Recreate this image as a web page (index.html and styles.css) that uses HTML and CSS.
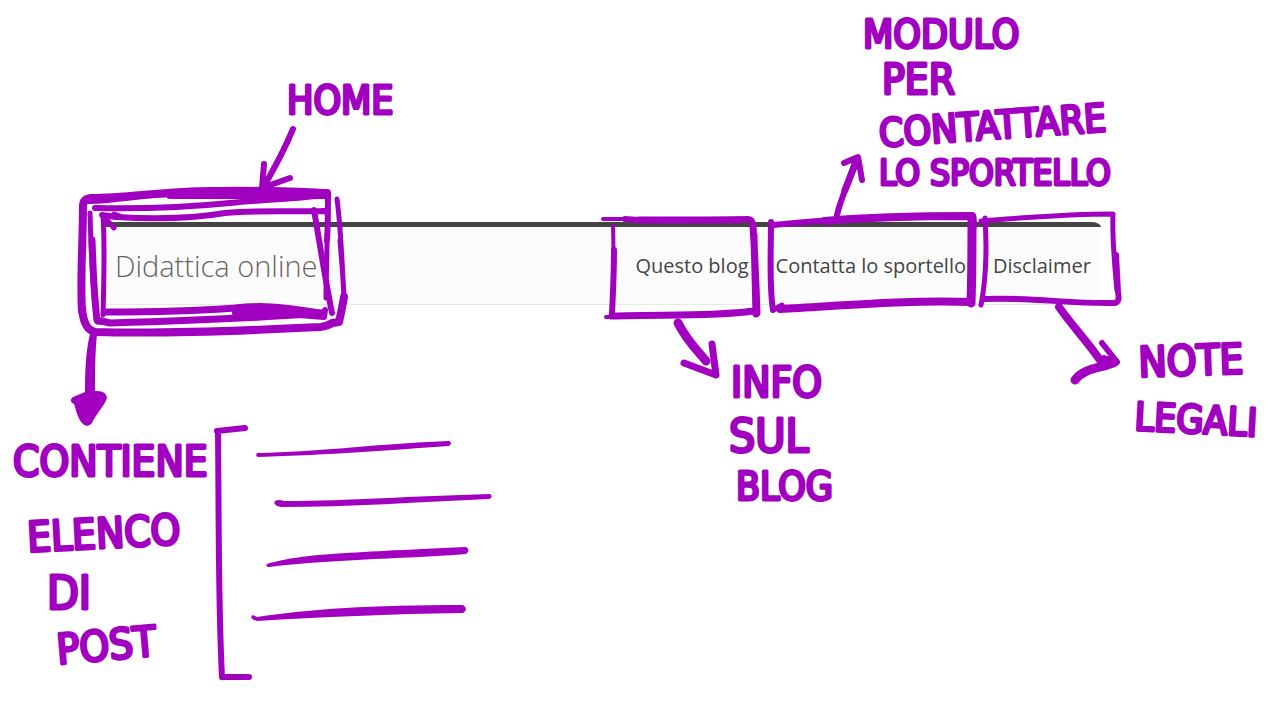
FILE: index.html
```html
<!DOCTYPE html>
<html lang="it">
<head>
<meta charset="utf-8">
<title>Didattica online</title>
<meta name="viewport" content="width=device-width, initial-scale=1">
<link rel="stylesheet" href="styles.css">
</head>
<body>
<main class="board">
  <header class="site-header">
    <a class="brand" href="#home">Didattica online</a>
    <nav class="menu" aria-label="Menu principale">
      <a href="#blog">Questo blog</a>
      <a href="#contatta">Contatta lo sportello</a>
      <a href="#disclaimer">Disclaimer</a>
    </nav>
  </header>

  <svg class="ink" viewBox="0 0 1280 709" aria-label="Note a mano">
    <!-- Home frame -->
    <g class="stroke">
      <path class="w6" d="M89 201C120 200 140 195 170 194M95 208C145 209 190 207 230 203C270 199 300 199 328 194"/>
      <path class="w8" d="M82 311C80 280 83 240 83 206Q83 199 91 198C130 198 170 190 220 191C260 190 300 192 327 193"/>
      <path class="w8" d="M170 195L327 195M82 308C83 322 87 331 96 332C160 334 240 331 320 327Q328 326 332 323L339 322C342 310 343 302 344 297"/>
      <path class="w5" d="M344 297C342 265 341 228 337 199M344 297C343 272 341 255 340 240M90 213C91 250 92 285 97 322L110 323M103 215C105 245 104 280 103 315"/>
      <path class="w7" d="M92 240C93 270 94 295 97 320L110 323C180 321 260 318 321 313M106 312C150 312 195 311 235 308C270 304 290 309 322 313"/>
      <path class="w6" d="M102 215L116 217C150 219 190 219 225 213C260 210 290 212 325 211M235 313L320 313M328 195C328 215 328 225 327 240"/>
      <path class="w5" d="M327 240C327 260 326 280 326 298M106 219L114 228M114 214L120 216"/>
      <path class="w6" d="M314 210C320 245 325 278 332 313M235 310L324 317L325 310"/>
    </g>
    <!-- Questo blog frame -->
    <g class="stroke">
      <path class="w4" d="M603 219L640 219M613 226C614 255 613 290 612 314M606 317L640 316"/>
      <path class="w6" d="M625 219C665 222 715 220 748 219Q753 219 753 226M614 250C614 275 613 290 612 314"/>
      <path class="w7" d="M640 220L740 220M753 226C755 256 756 285 757 313M754 235L756 314M612 316C660 314 710 317 753 311"/>
    </g>
    <!-- Contatta frame -->
    <g class="stroke">
      <path class="w6" d="M771 222C771 255 769 285 773 310M773 225C800 223 820 220 850 219"/>
      <path class="w8" d="M825 221C870 217 930 216 972 216L973 226M780 309C840 306 900 300 971 302"/>
      <path class="w9" d="M972 217C972 247 972 275 971 303"/>
      <path class="w5" d="M773 310L782 305"/>
    </g>
    <!-- Disclaimer frame -->
    <g class="stroke">
      <path class="w5" d="M985 218C987 250 986 280 981 305M981 221C1020 218 1065 214 1113 214C1112 240 1115 270 1117 290"/>
      <path class="w6" d="M984 299C1030 297 1070 304 1115 303Q1120 302 1118 292L1116 255"/>
    </g>
    <!-- Arrows -->
    <g class="stroke">
      <path class="w6" d="M293 129C286 146 274 169 263 188M264 164L262 188L290 178"/>
      <path class="w6" d="M837 215C841 197 850 181 856 159M844 163L858 157L862 180"/>
      <path class="w7" d="M845 190L856 162"/>
      <path class="w9" d="M678 323C687 341 697 350 706 361"/>
      <path class="w7" d="M712 344L716 375L684 363"/>
      <path class="w8" d="M1059 307C1073 327 1088 342 1102 363"/>
      <path class="w6" d="M1102 343L1117 362L1104 358"/>
      <path class="w9" d="M1075 380C1085 367 1101 369 1115 362"/>
    </g>
    <path class="fill" d="M90 334L97 334C95 354 95 374 95 391Q106 390 107 398C105 405 96 414 92 423Q87 429 82 423C77 417 76 409 74 404Q68 401 73 397L85 392C85 370 86 350 90 334Z"/>
    <!-- Bracket and list lines -->
    <g class="stroke">
      <path class="w6" d="M217 431L245 428M218 434C219 520 218 600 222 677L249 677"/>
    </g>
    <g class="fill">
      <path d="M257 453C320 452 360 445 449 441Q453 443 449 446C390 450 330 455 258 457Q255 456 257 453Z"/>
      <path d="M275 501Q278 499 284 501C350 501 410 496 490 494Q494 497 489 499C420 502 350 507 281 507Q272 505 275 501Z"/>
      <path d="M267 564C300 554 340 553 466 547Q471 550 466 554C400 559 320 560 269 567Q265 567 267 564Z"/>
      <path d="M253 615L257 617C310 609 370 605 463 605Q469 609 463 613C390 614 320 617 257 621Q248 618 253 615Z"/>
    </g>

    <g class="note">
      <text class="m" x="287" y="114">HOME</text>
      <text class="m" x="863" y="48">MODULO</text>
      <text class="l" x="882" y="94">PER</text>
      <g transform="rotate(-4 880 147)"><text class="m" x="880" y="147">CONTATTARE</text></g>
      <text class="s" x="879" y="185">LO SPORTELLO</text>
      <text class="l" x="13" y="476">CONTIENE</text>
      <g transform="rotate(-3 28 552)"><text class="l" x="28" y="552">ELENCO</text></g>
      <text class="xl" x="47" y="609">DI</text>
      <g transform="rotate(-5 60 664)"><text class="l" x="58" y="664">POST</text></g>
      <text class="l" x="731" y="397">INFO</text>
      <text class="xl" x="729" y="452">SUL</text>
      <text class="m" x="736" y="500">BLOG</text>
      <g transform="rotate(-2 1139 377)"><text class="l" x="1139" y="377">NOTE</text></g>
      <g transform="rotate(3 1134 430)"><text class="m" x="1134" y="430">LEGALI</text></g>
    </g>
  </svg>
</main>
</body>
</html>
```
FILE: styles.css
```css
* {
  box-sizing: border-box;
}

body {
  margin: 0;
  background: #fff;
  font-family: "Open Sans", "Noto Sans", sans-serif;
}

/* Header and annotations share one grid cell, ink on top */
.board {
  display: grid;
  grid-template-columns: minmax(0, 1fr);
}

.site-header,
.ink {
  grid-area: 1 / 1;
}

.site-header {
  display: flex;
  align-items: center;
  align-self: start;
  justify-content: space-between;
  min-height: 83px;
  margin: 17.35% 14% 0 8.2%;
  padding: 0 10px;
  background: #fcfcfc;
  border-top: 5px solid #444;
  border-bottom: 1px solid #e8e8e8;
  border-top-right-radius: 10px 5px;
}

.brand {
  color: #666;
  font-size: 29px;
  font-weight: 300;
  line-height: 40px;
  text-decoration: none;
}

.menu {
  display: flex;
  gap: 27px;
}

.menu a {
  color: #444;
  font-size: 20px;
  line-height: 28px;
  text-decoration: none;
}

/* Marker annotations drawn over the header */
.ink {
  display: block;
  width: 100%;
  pointer-events: none;
}

.stroke {
  fill: none;
  stroke: #a100c1;
  stroke-linecap: round;
  stroke-linejoin: round;
}

.fill {
  fill: #a100c1;
}

.w4 { stroke-width: 4px; }
.w5 { stroke-width: 5px; }
.w6 { stroke-width: 6px; }
.w7 { stroke-width: 7px; }
.w8 { stroke-width: 8px; }
.w9 { stroke-width: 9px; }

.note {
  fill: #a100c1;
  stroke: #a100c1;
  stroke-width: 3px;
  stroke-linejoin: round;
  font-family: "DejaVu Sans Condensed", "DejaVu Sans", sans-serif;
}

.note .s { font-size: 35px; }
.note .m { font-size: 39px; }
.note .l { font-size: 42px; }
.note .xl { font-size: 46px; }
```
